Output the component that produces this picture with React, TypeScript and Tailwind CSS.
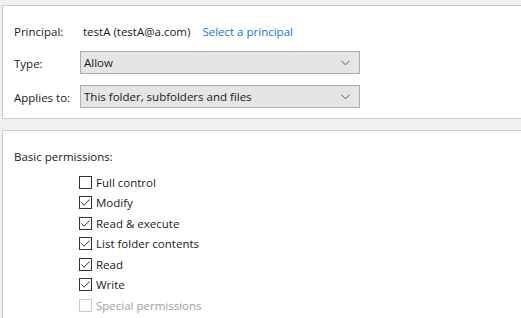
import React from "react";

const font = { fontFamily: '"Segoe UI", "Open Sans", "Noto Sans", sans-serif' };

const Chevron = () => (
  <svg width="9" height="6" viewBox="0 0 9 6" className="shrink-0">
    <path d="M0.5 0.8 L4.5 4.8 L8.5 0.8" fill="none" stroke="#555" strokeWidth="1" />
  </svg>
);

const Select = ({ value }: { value: string }) => (
  <div className="flex items-center justify-between w-[280px] h-[23px] bg-[#e5e5e5] border border-[#adadad] pl-[3px] pr-[9px] text-[11.5px] text-[#1a1a1a]">
    <span>{value}</span>
    <Chevron />
  </div>
);

const Check = ({ label, checked, disabled }: { label: string; checked?: boolean; disabled?: boolean }) => (
  <div className="flex items-center gap-[4px] h-[20.5px]">
    <div
      className={`w-[13px] h-[13px] border flex items-center justify-center bg-white ${disabled ? "border-[#cccccc]" : "border-[#333333]"}`}
    >
      {checked && (
        <svg width="11" height="11" viewBox="0 0 11 11">
          <path d="M1.5 5.5 L4.2 8.2 L9.5 2.5" fill="none" stroke="#333" strokeWidth="1" />
        </svg>
      )}
    </div>
    <span className={`text-[11.5px] ${disabled ? "text-[#a0a0a0]" : "text-[#1a1a1a]"}`}>{label}</span>
  </div>
);

export default function App() {
  return (
    <div className="w-[521px] h-[318px] bg-[#f0f0f0] overflow-hidden pt-[5px] pl-[2px] flex flex-col gap-[11px]" style={font}>
      <div className="h-[114px] bg-white border border-r-0 border-[#cccccc] pt-[18px] pl-[11px]">
        <div className="grid grid-cols-[66px_auto] items-center gap-y-[11px] text-[11.5px] text-[#1a1a1a]">
          <span className="h-[16px] leading-[16px]">Principal:</span>
          <div className="flex gap-[12px] pl-[3px] h-[16px] leading-[16px]">
            <span>testA (testA@a.com)</span>
            <span className="text-[#1a73d9]">Select a principal</span>
          </div>
          <span className="pt-[3px]">Type:</span>
          <Select value="Allow" />
          <span className="pt-[3px]">Applies to:</span>
          <Select value="This folder, subfolders and files" />
        </div>
      </div>
      <div className="flex-1 bg-white border-t border-l border-[#cccccc] pt-[18px] pl-[11px]">
        <div className="text-[11.5px] text-[#1a1a1a] h-[16px] leading-[16px]">Basic permissions:</div>
        <div className="pl-[65px] pt-[7px] flex flex-col">
          <Check label="Full control" />
          <Check label="Modify" checked />
          <Check label="Read & execute" checked />
          <Check label="List folder contents" checked />
          <Check label="Read" checked />
          <Check label="Write" checked />
          <Check label="Special permissions" disabled />
        </div>
      </div>
    </div>
  );
}
